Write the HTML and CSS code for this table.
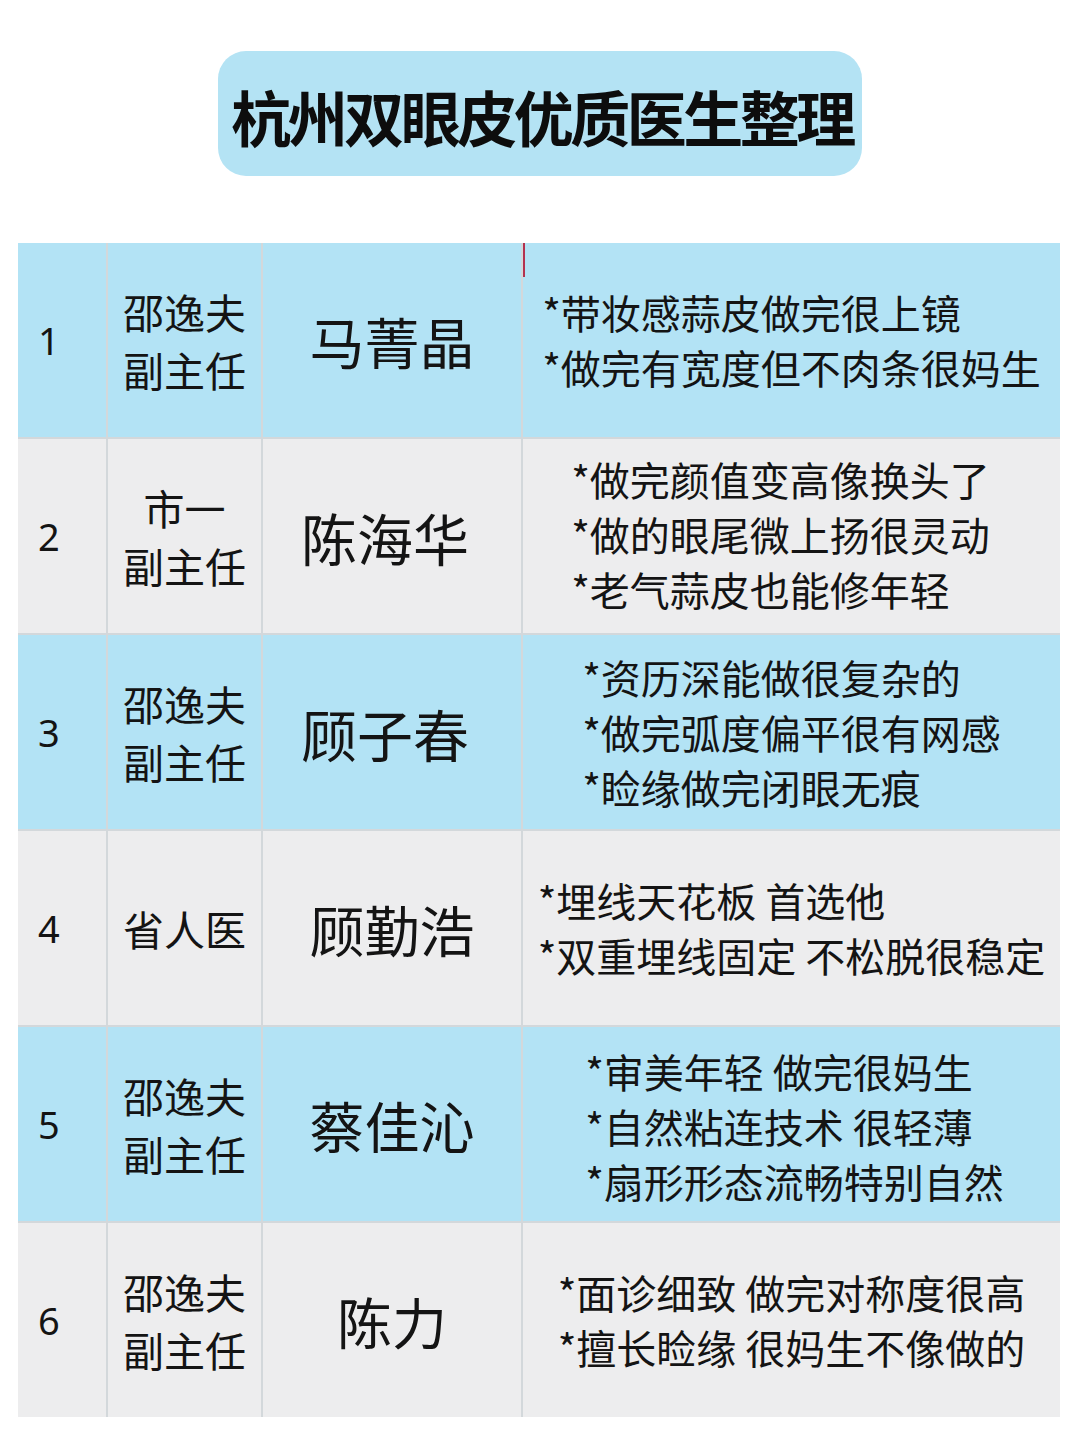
FILE: index.html
```html
<!DOCTYPE html>
<html lang="zh-CN">
<head>
<meta charset="utf-8">
<title>杭州双眼皮优质医生整理</title>
<link rel="stylesheet" href="styles.css">
</head>
<body>
<div class="page">
  <div class="title-wrap">
    <div class="title"><span class="title-text">杭州双眼皮优质医生整理</span></div>
  </div>
  <div class="table">
    <div class="cell num blue">1</div>
    <div class="cell hosp blue"><span>邵逸夫<br>副主任</span></div>
    <div class="cell name blue">马菁晶</div>
    <div class="cell desc blue first"><div class="lines">*带妆感蒜皮做完很上镜<br>*做完有宽度但不肉条很妈生</div></div>

    <div class="cell num gray">2</div>
    <div class="cell hosp gray"><span>市一<br>副主任</span></div>
    <div class="cell name gray shift">陈海华</div>
    <div class="cell desc gray"><div class="lines r2">*做完颜值变高像换头了<br>*做的眼尾微上扬很灵动<br>*老气蒜皮也能修年轻</div></div>

    <div class="cell num blue">3</div>
    <div class="cell hosp blue"><span>邵逸夫<br>副主任</span></div>
    <div class="cell name blue shift">顾子春</div>
    <div class="cell desc blue"><div class="lines">*资历深能做很复杂的<br>*做完弧度偏平很有网感<br>*睑缘做完闭眼无痕</div></div>

    <div class="cell num gray">4</div>
    <div class="cell hosp gray"><span>省人医</span></div>
    <div class="cell name gray">顾勤浩</div>
    <div class="cell desc gray"><div class="lines">*埋线天花板 首选他<br>*双重埋线固定 不松脱很稳定</div></div>

    <div class="cell num blue">5</div>
    <div class="cell hosp blue"><span>邵逸夫<br>副主任</span></div>
    <div class="cell name blue">蔡佳沁</div>
    <div class="cell desc blue"><div class="lines r5">*审美年轻 做完很妈生<br>*自然粘连技术 很轻薄<br>*扇形形态流畅特别自然</div></div>

    <div class="cell num gray">6</div>
    <div class="cell hosp gray"><span>邵逸夫<br>副主任</span></div>
    <div class="cell name gray">陈力</div>
    <div class="cell desc gray"><div class="lines">*面诊细致 做完对称度很高<br>*擅长睑缘 很妈生不像做的</div></div>
  </div>
</div>
</body>
</html>
```

FILE: styles.css
```css
* { box-sizing: border-box; }
html, body { margin: 0; padding: 0; background: #ffffff; }
body {
  width: 1080px;
  height: 1440px;
  font-family: "Noto Sans CJK SC", "Noto Sans", sans-serif;
  color: #141414;
}
.page {
  padding-top: 51px;
}
.title-wrap {
  display: flex;
  justify-content: center;
}
.title {
  margin: 0;
  width: 644px;
  height: 125px;
  border-radius: 28px;
  background: #b4e3f4;
  display: flex;
  align-items: center;
  justify-content: center;
  padding-top: 4px;
  padding-left: 4px;
}
.title-text {
  font-size: 60px;
  font-weight: 700;
  letter-spacing: -3.5px;
  line-height: 1;
  white-space: nowrap;
  color: #0d0d0d;
}
.table {
  margin: 67px 0 0 18px;
  width: 1042px;
  display: grid;
  grid-template-columns: 88px 153px 258px 537px;
  grid-auto-rows: 194px;
  gap: 2px;
  background: #d3d8db;
}
.cell {
  display: flex;
  align-items: center;
}
.blue { background: #b3e3f5; }
.gray { background: #ededee; }
.num {
  padding-left: 20px;
  font-size: 38px;
  font-family: "Noto Sans", "Noto Sans CJK SC", sans-serif;
}
.hosp {
  justify-content: center;
  text-align: center;
  font-size: 41px;
  line-height: 58px;
}
.name {
  justify-content: center;
  font-size: 55px;
}
.name.shift {
  padding-right: 14px;
  font-size: 56px;
}
.desc {
  justify-content: center;
  position: relative;
}
.lines {
  text-align: left;
  font-size: 40px;
  line-height: 55px;
  white-space: nowrap;
}
.lines.r2 { margin-right: 22px; margin-top: -4px; }
.lines.r5 { margin-left: 6px; margin-top: 4px; }
.first::before {
  content: "";
  position: absolute;
  left: 0;
  top: 0;
  width: 2px;
  height: 34px;
  background: #b3324f;
}
```
